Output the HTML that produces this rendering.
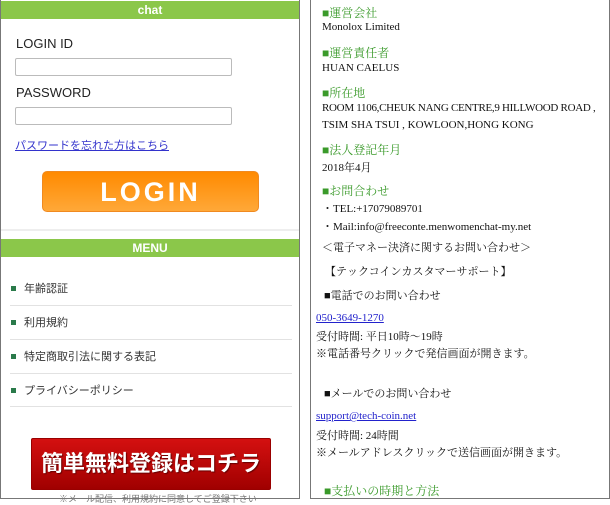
<!DOCTYPE html>
<html><head><meta charset="utf-8"><style>
*{margin:0;padding:0;box-sizing:border-box}
body{width:610px;height:500px;background:#fff;position:relative;overflow:hidden;font-family:"Liberation Sans","Noto Sans CJK JP",sans-serif}
.a{position:absolute;white-space:nowrap}
#L{position:absolute;left:0;top:0;width:300px;height:499px;border:1px solid #777;border-top:none}
#R{position:absolute;left:310px;top:0;width:300px;height:499px;border:1px solid #777;border-top:none;overflow:hidden}
.hd{position:absolute;left:0;width:298px;height:18px;background:#8bc74a;color:#fff;font-weight:bold;font-size:12px;text-align:center;line-height:18px}
.lb{font-size:13px;color:#222}
.in{position:absolute;left:14px;width:217px;height:18px;border:1px solid #bbb;border-radius:2px}
.mi{font-size:11px;color:#333;left:23px}
.bl{position:absolute;left:10px;width:5px;height:5px;background:#2a7a4a}
.dv{position:absolute;left:9px;width:282px;height:1px;background:#e2e2e2}
.s{font-family:"Liberation Serif","Noto Serif CJK SC",serif;font-size:11px;color:#111;left:11px}
.g{color:#3a9a2a;font-size:12px}
.k{color:#22c;text-decoration:underline}
</style></head><body>
<div id="L">
<div class="hd" style="top:1px">chat</div>
<div class="a lb" style="left:15px;top:36px">LOGIN ID</div>
<div class="in" style="top:58px"></div>
<div class="a lb" style="left:15px;top:85px">PASSWORD</div>
<div class="in" style="top:107px"></div>
<div class="a" style="left:14px;top:137px;font-size:11px;color:#33c;text-decoration:underline">パスワードを忘れた方はこちら</div>
<div class="a" style="left:41px;top:171px;width:217px;height:41px;border-radius:5px;background:linear-gradient(#ff8a00,#ffa838);border:1px solid #f08a20;color:#fff;font-weight:bold;font-size:27px;letter-spacing:3px;text-align:center;line-height:40px">LOGIN</div>
<div class="a" style="left:0;top:229px;width:298px;height:2px;background:#eee"></div>
<div class="hd" style="top:239px">MENU</div>
<div class="bl" style="top:286px"></div><div class="a mi" style="top:280px">年齢認証</div><div class="dv" style="top:305px"></div>
<div class="bl" style="top:320px"></div><div class="a mi" style="top:314px">利用規約</div><div class="dv" style="top:339px"></div>
<div class="bl" style="top:354px"></div><div class="a mi" style="top:348px">特定商取引法に関する表記</div><div class="dv" style="top:373px"></div>
<div class="bl" style="top:388px"></div><div class="a mi" style="top:382px">プライバシーポリシー</div><div class="dv" style="top:406px"></div>
<div class="a" style="left:30px;top:438px;width:240px;height:52px;background:linear-gradient(#d41010,#a00000);border:1px solid #900;border-radius:2px;color:#fff;font-weight:bold;font-size:22px;text-align:center;line-height:50px;text-shadow:1px 1px 1px #600">簡単無料登録はコチラ</div>
<div class="a" style="left:58px;top:492px;font-size:9px;color:#777">※メール配信、利用規約に同意してご登録下さい</div>
</div>
<div id="R">
<div class="a s g" style="top:4px">■運営会社</div>
<div class="a s" style="top:21px">Monolox Limited</div>
<div class="a s g" style="top:44px">■運営責任者</div>
<div class="a s" style="top:62px">HUAN CAELUS</div>
<div class="a s g" style="top:84px">■所在地</div>
<div class="a s" style="top:102px;letter-spacing:-0.3px">ROOM 1106,CHEUK NANG CENTRE,9 HILLWOOD ROAD ,</div>
<div class="a s" style="top:119px">TSIM SHA TSUI , KOWLOON,HONG KONG</div>
<div class="a s g" style="top:141px">■法人登記年月</div>
<div class="a s" style="top:159px">2018年4月</div>
<div class="a s g" style="top:182px">■お問合わせ</div>
<div class="a s" style="top:200px">・TEL:+17079089701</div>
<div class="a s" style="top:218px">・Mail:info@freeconte.menwomenchat-my.net</div>
<div class="a s" style="top:239px">＜電子マネー決済に関するお問い合わせ＞</div>
<div class="a s" style="top:263px;left:14px">【テックコインカスタマーサポート】</div>
<div class="a s" style="top:287px;left:13px">■電話でのお問い合わせ</div>
<div class="a s k" style="top:312px;left:5px">050-3649-1270</div>
<div class="a s" style="top:328px;left:5px">受付時間: 平日10時～19時</div>
<div class="a s" style="top:345px;left:5px">※電話番号クリックで発信画面が開きます。</div>
<div class="a s" style="top:385px;left:13px">■メールでのお問い合わせ</div>
<div class="a s k" style="top:410px;left:5px">support@tech-coin.net</div>
<div class="a s" style="top:427px;left:5px">受付時間: 24時間</div>
<div class="a s" style="top:444px;left:5px">※メールアドレスクリックで送信画面が開きます。</div>
<div class="a s g" style="top:482px;left:13px">■支払いの時期と方法</div>
</div>
</body></html>
